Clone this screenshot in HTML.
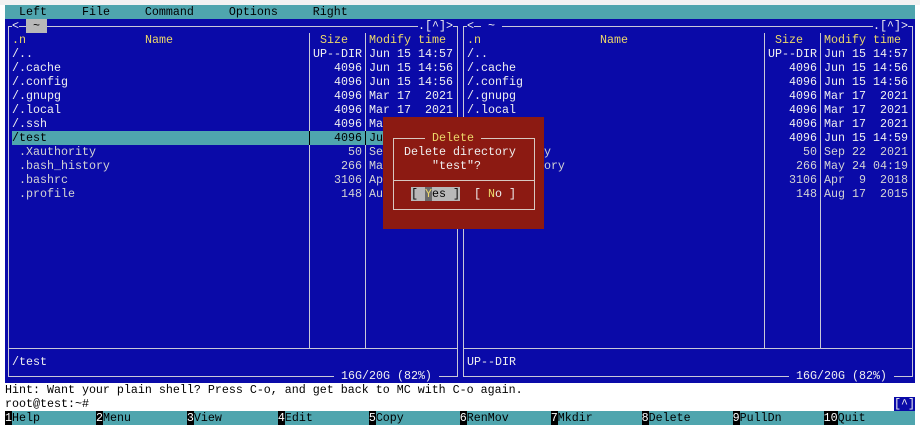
<!DOCTYPE html>
<html><head><meta charset="utf-8"><style>
html,body{margin:0;padding:0;background:#fff;width:920px;height:430px;overflow:hidden;position:relative}
.s{position:absolute;font-family:"Liberation Mono",monospace;font-size:11.667px;line-height:14px;height:14px;white-space:pre;color:#f0f0f0}
.b{position:absolute}
.y{color:#ecd86a}
.g{color:#d4d4d4}
.k{color:#000}
</style></head><body>
<div class="b" style="left:0;top:0;width:920px;height:5px;background:#f2f2f2"></div>
<div class="b" style="left:5px;top:5px;width:910px;height:14px;background:#4fa5ae"></div>
<div class="s k" style="left:19px;top:5px">Left     File     Command     Options     Right</div>
<div class="b" style="left:5px;top:19px;width:910px;height:364px;background:#0a0aa8"></div>
<div class="b" style="left:8px;top:26px;width:448px;height:349px;border:1px solid #c8c8d8"></div>
<div class="b" style="left:463px;top:26px;width:448px;height:349px;border:1px solid #c8c8d8"></div>
<div class="b" style="left:9px;top:348px;width:448px;height:1px;background:#c8c8d8"></div>
<div class="b" style="left:464px;top:348px;width:448px;height:1px;background:#c8c8d8"></div>
<div class="b" style="left:309px;top:33px;width:1px;height:315px;background:#c8c8d8"></div>
<div class="b" style="left:365px;top:33px;width:1px;height:315px;background:#c8c8d8"></div>
<div class="b" style="left:764px;top:33px;width:1px;height:315px;background:#c8c8d8"></div>
<div class="b" style="left:820px;top:33px;width:1px;height:315px;background:#c8c8d8"></div>
<div class="s" style="left:12px;top:19px;background:#0a0aa8">&lt;</div>
<div class="s k" style="left:26px;top:19px;background:#b8b8b8"> ~ </div>
<div class="s" style="left:418px;top:19px;background:#0a0aa8">.[^]&gt;</div>
<div class="s" style="left:467px;top:19px;background:#0a0aa8">&lt;</div>
<div class="s" style="left:481px;top:19px;background:#0a0aa8"> ~ </div>
<div class="s" style="left:873px;top:19px;background:#0a0aa8">.[^]&gt;</div>
<div class="s y" style="left:12px;top:33px">.n</div>
<div class="s y" style="left:145px;top:33px">Name</div>
<div class="s y" style="left:320px;top:33px">Size</div>
<div class="s y" style="left:369px;top:33px">Modify time</div>
<div class="s y" style="left:467px;top:33px">.n</div>
<div class="s y" style="left:600px;top:33px">Name</div>
<div class="s y" style="left:775px;top:33px">Size</div>
<div class="s y" style="left:824px;top:33px">Modify time</div>
<div class="b" style="left:12px;top:131px;width:441px;height:14px;background:#4fa5ae"></div>
<div class="b" style="left:309px;top:131px;width:1px;height:14px;background:#000"></div>
<div class="b" style="left:365px;top:131px;width:1px;height:14px;background:#000"></div>
<div class="s" style="left:12px;top:47px">/..
/.cache
/.config
/.gnupg
/.local
/.ssh</div>
<div class="s k" style="left:12px;top:131px">/test</div>
<div class="s g" style="left:12px;top:145px"> .Xauthority
 .bash_history
 .bashrc
 .profile</div>
<div class="s" style="left:313px;top:47px">UP--DIR
   4096
   4096
   4096
   4096
   4096</div>
<div class="s k" style="left:313px;top:131px">   4096</div>
<div class="s g" style="left:313px;top:145px">     50
    266
   3106
    148</div>
<div class="s" style="left:369px;top:47px">Jun 15 14:57
Jun 15 14:56
Jun 15 14:56
Mar 17  2021
Mar 17  2021
Mar 17  2021</div>
<div class="s k" style="left:369px;top:131px">Jun 15 14:59</div>
<div class="s g" style="left:369px;top:145px">Sep 22  2021
May 24 04:19
Apr  9  2018
Aug 17  2015</div>
<div class="s" style="left:467px;top:47px">/..
/.cache
/.config
/.gnupg
/.local
/.ssh
/test</div>
<div class="s g" style="left:467px;top:145px"> .Xauthority
 .bash_history
 .bashrc
 .profile</div>
<div class="s" style="left:768px;top:47px">UP--DIR
   4096
   4096
   4096
   4096
   4096
   4096</div>
<div class="s g" style="left:768px;top:145px">     50
    266
   3106
    148</div>
<div class="s" style="left:824px;top:47px">Jun 15 14:57
Jun 15 14:56
Jun 15 14:56
Mar 17  2021
Mar 17  2021
Mar 17  2021
Jun 15 14:59</div>
<div class="s g" style="left:824px;top:145px">Sep 22  2021
May 24 04:19
Apr  9  2018
Aug 17  2015</div>
<div class="s" style="left:12px;top:355px">/test</div>
<div class="s" style="left:467px;top:355px">UP--DIR</div>
<div class="s" style="left:334px;top:369px;background:#0a0aa8"> 16G/20G (82%) </div>
<div class="s" style="left:789px;top:369px;background:#0a0aa8"> 16G/20G (82%) </div>
<div class="b" style="left:383px;top:117px;width:161px;height:112px;background:#8c1a12"></div>
<div class="b" style="left:393px;top:138px;width:140px;height:70px;border:1px solid #d8c8c0"></div>
<div class="b" style="left:394px;top:180px;width:140px;height:1px;background:#d8c8c0"></div>
<div class="s y" style="left:425px;top:131px;background:#8c1a12"> Delete </div>
<div class="s" style="left:404px;top:145px">Delete directory</div>
<div class="s" style="left:432px;top:159px">"test"?</div>
<div class="s k" style="left:411px;top:187px;background:#b8b8b8">[ <span style="background:#6a6a6a;color:#ecd86a">Y</span>es ]</div>
<div class="s" style="left:474px;top:187px">[ <span class="y">N</span>o ]</div>
<div class="s k" style="left:5px;top:383px">Hint: Want your plain shell? Press C-o, and get back to MC with C-o again.</div>
<div class="s k" style="left:5px;top:397px">root@test:~#</div>
<div class="s" style="left:894px;top:397px;background:#0a0aa8">[^]</div>
<div class="b" style="left:5px;top:411px;width:910px;height:14px;background:#4fa5ae"></div>
<div class="s k" style="left:5px;top:411px"><span style="background:#000;color:#fff">1</span>Help        <span style="background:#000;color:#fff">2</span>Menu        <span style="background:#000;color:#fff">3</span>View        <span style="background:#000;color:#fff">4</span>Edit        <span style="background:#000;color:#fff">5</span>Copy        <span style="background:#000;color:#fff">6</span>RenMov      <span style="background:#000;color:#fff">7</span>Mkdir       <span style="background:#000;color:#fff">8</span>Delete      <span style="background:#000;color:#fff">9</span>PullDn      <span style="background:#000;color:#fff">10</span>Quit</div>
</body></html>
